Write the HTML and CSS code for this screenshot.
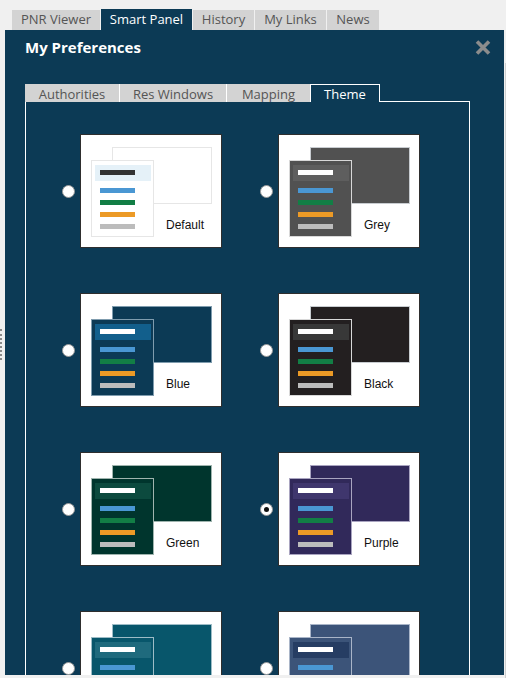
FILE: index.html
```html
<!DOCTYPE html>
<html>
<head>
<meta charset="utf-8">
<link rel="stylesheet" href="styles.css">
</head>
<body>
<div class="grip"></div>
<div class="edge"></div>
<nav class="top-tabs">
  <div class="ttab w1">PNR Viewer</div>
  <div class="ttab w2 active">Smart Panel</div>
  <div class="ttab w3">History</div>
  <div class="ttab w4">My Links</div>
  <div class="ttab w5">News</div>
</nav>
<section class="panel">
  <header class="panel-head">
    <h1 class="title">My Preferences</h1>
    <svg class="close" width="16" height="15" viewBox="0 0 16 15"><path d="M2 1.5 L14 13.5 M14 1.5 L2 13.5" stroke="#8c8c8c" stroke-width="3.6" stroke-linecap="butt"/></svg>
  </header>
  <div class="sub-tabs">
    <div class="stab s1">Authorities</div>
    <div class="stab s2">Res Windows</div>
    <div class="stab s3">Mapping</div>
    <div class="stab s4 active">Theme</div>
  </div>
  <div class="box">
    <div class="grid">
      <div class="opt"><span class="radio"></span>
        <div class="card t-default"><div class="back"></div><div class="front"><div class="hdr"><i class="bar b0"></i></div><i class="bar b1"></i><i class="bar b2"></i><i class="bar b3"></i><i class="bar b4"></i></div><span class="label">Default</span></div>
      </div>
      <div class="opt"><span class="radio"></span>
        <div class="card t-grey"><div class="back"></div><div class="front"><div class="hdr"><i class="bar b0"></i></div><i class="bar b1"></i><i class="bar b2"></i><i class="bar b3"></i><i class="bar b4"></i></div><span class="label">Grey</span></div>
      </div>
      <div class="opt"><span class="radio"></span>
        <div class="card t-blue"><div class="back"></div><div class="front"><div class="hdr"><i class="bar b0"></i></div><i class="bar b1"></i><i class="bar b2"></i><i class="bar b3"></i><i class="bar b4"></i></div><span class="label">Blue</span></div>
      </div>
      <div class="opt"><span class="radio"></span>
        <div class="card t-black"><div class="back"></div><div class="front"><div class="hdr"><i class="bar b0"></i></div><i class="bar b1"></i><i class="bar b2"></i><i class="bar b3"></i><i class="bar b4"></i></div><span class="label">Black</span></div>
      </div>
      <div class="opt"><span class="radio"></span>
        <div class="card t-green"><div class="back"></div><div class="front"><div class="hdr"><i class="bar b0"></i></div><i class="bar b1"></i><i class="bar b2"></i><i class="bar b3"></i><i class="bar b4"></i></div><span class="label">Green</span></div>
      </div>
      <div class="opt"><span class="radio checked"></span>
        <div class="card t-purple"><div class="back"></div><div class="front"><div class="hdr"><i class="bar b0"></i></div><i class="bar b1"></i><i class="bar b2"></i><i class="bar b3"></i><i class="bar b4"></i></div><span class="label">Purple</span></div>
      </div>
      <div class="opt"><span class="radio"></span>
        <div class="card t-teal"><div class="back"></div><div class="front"><div class="hdr"><i class="bar b0"></i></div><i class="bar b1"></i><i class="bar b2"></i><i class="bar b3"></i><i class="bar b4"></i></div></div>
      </div>
      <div class="opt"><span class="radio"></span>
        <div class="card t-slate"><div class="back"></div><div class="front"><div class="hdr"><i class="bar b0"></i></div><i class="bar b1"></i><i class="bar b2"></i><i class="bar b3"></i><i class="bar b4"></i></div></div>
      </div>
    </div>
  </div>
</section>
</body>
</html>
```
FILE: styles.css
```css
* { box-sizing: border-box; }
html, body { margin: 0; padding: 0; }
body {
  background: #f0f0f0;
  width: 506px;
  height: 678px;
  overflow: hidden;
  position: relative;
  font-family: "Open Sans", "Noto Sans", sans-serif;
}
.grip {
  position: absolute;
  left: 0; top: 329px;
  width: 2px; height: 31px;
  border-left: 2px dotted #8a8a8a;
}
.edge {
  position: absolute;
  left: 505px; top: 63px;
  width: 1px; height: 615px;
  background: #cfcfcf;
}
.top-tabs {
  display: flex;
  align-items: flex-end;
  gap: 1px;
  margin-left: 12px;
  padding-top: 9px;
  height: 30px;
}
.ttab {
  height: 20px;
  line-height: 19px;
  font-size: 13px;
  color: #555;
  background: #d3d3d3;
  text-align: center;
  white-space: nowrap;
}
.ttab.active { height: 21px; line-height: 21px; background: #0c3a55; color: #fff; }
.w1 { width: 88px; }
.w2 { width: 91px; }
.w3 { width: 61px; }
.w4 { width: 71px; }
.w5 { width: 52px; }

.panel {
  margin-left: 5px;
  width: 499px;
  height: 645px;
  background: #0c3a55;
  overflow: hidden;
}
.panel-head {
  height: 54px;
  display: flex;
  justify-content: space-between;
  align-items: flex-start;
  padding: 7px 13px 0 20px;
}
.title {
  margin: 0;
  font-size: 15px;
  line-height: 20px;
  font-weight: 700;
  color: #fff;
}
.close { margin-top: 3px; }

.sub-tabs {
  display: flex;
  margin-left: 20px;
  height: 18px;
  position: relative;
  z-index: 2;
}
.stab {
  height: 18px;
  line-height: 18px;
  padding-top: 1px;
  font-size: 13px;
  color: #555;
  background: #d3d3d3;
  text-align: center;
  border-right: 1px solid #fff;
  white-space: nowrap;
}
.s1 { width: 95px; }
.s2 { width: 107px; }
.s3 { width: 83px; border-right: none; }
.s4 { width: 70px; }
.stab.active {
  background: #0c3a55;
  color: #fff;
  border: 1px solid #fff;
  border-bottom: none;
  line-height: 17px;
  padding-top: 1px;
}

.box {
  margin-left: 20px;
  margin-top: -1px;
  width: 445px;
  height: 600px;
  border: 1px solid #fff;
  border-bottom: none;
  padding: 32px 0 0 36px;
}
.grid {
  display: grid;
  grid-template-columns: 198px 198px;
  row-gap: 45px;
}
.opt {
  display: flex;
  align-items: center;
}
.radio {
  width: 13px; height: 13px;
  border-radius: 50%;
  background: #fff;
  border: 1px solid #9a9a9a;
  margin-right: 5px;
  display: flex;
  align-items: center;
  justify-content: center;
}
.radio.checked::after {
  content: "";
  width: 5px; height: 5px;
  border-radius: 50%;
  background: #111;
}
.card {
  position: relative;
  width: 142px;
  height: 114px;
  background: #fff;
  border: 1px solid #2e2e2e;
}
.back {
  position: absolute;
  left: 31px; top: 12px;
  width: 100px; height: 57px;
  border: 1px solid #c8ccd0;
}
.front {
  position: absolute;
  left: 10px; top: 25px;
  width: 63px; height: 77px;
  border: 1px solid #d8d8d8;
}
.hdr {
  position: absolute;
  left: 3px; top: 4px;
  width: 56px; height: 16px;
}
.bar {
  position: absolute;
  left: 8px;
  width: 35px; height: 5px;
}
.hdr .bar { left: 5px; top: 5px; background: #fff; }
.b1 { top: 27px; background: #4a97d3; }
.b2 { top: 39px; background: #127e45; }
.b3 { top: 51px; background: #ec9a26; }
.b4 { top: 63px; background: #bcbcbc; }
.label {
  position: absolute;
  left: 85px; top: 83px;
  font-family: "Liberation Sans", Arial, sans-serif;
  font-size: 12px;
  color: #111;
}

.t-default .back { background: #fff; border-color: #e6e6e6; }
.t-default .front { background: #fff; border-color: #e6e6e6; }
.t-default .hdr { background: #e5f1f8; }
.t-default .hdr .bar { background: #333; }

.t-grey .back, .t-grey .front { background: #515151; }
.t-grey .hdr { background: #5e5e5e; }

.t-blue .back, .t-blue .front { background: #0c3a55; border-color: #7f9cae; }
.t-blue .hdr { background: #125f8c; }

.t-black .back, .t-black .front { background: #231f20; }
.t-black .hdr { background: #383838; }

.t-green .back, .t-green .front { background: #00352d; border-color: #9fb4ae; }
.t-green .hdr { background: #0c4a3e; }

.t-purple .back, .t-purple .front { background: #31295a; border-color: #a9a4c0; }
.t-purple .hdr { background: #3f366d; }

.t-teal .back, .t-teal .front { background: #08566b; border-color: #9dbcc6; }
.t-teal .hdr { background: #1f6a7d; }

.t-slate .back, .t-slate .front { background: #3c5479; border-color: #a9b5c8; }
.t-slate .hdr { background: #263d63; }
```
